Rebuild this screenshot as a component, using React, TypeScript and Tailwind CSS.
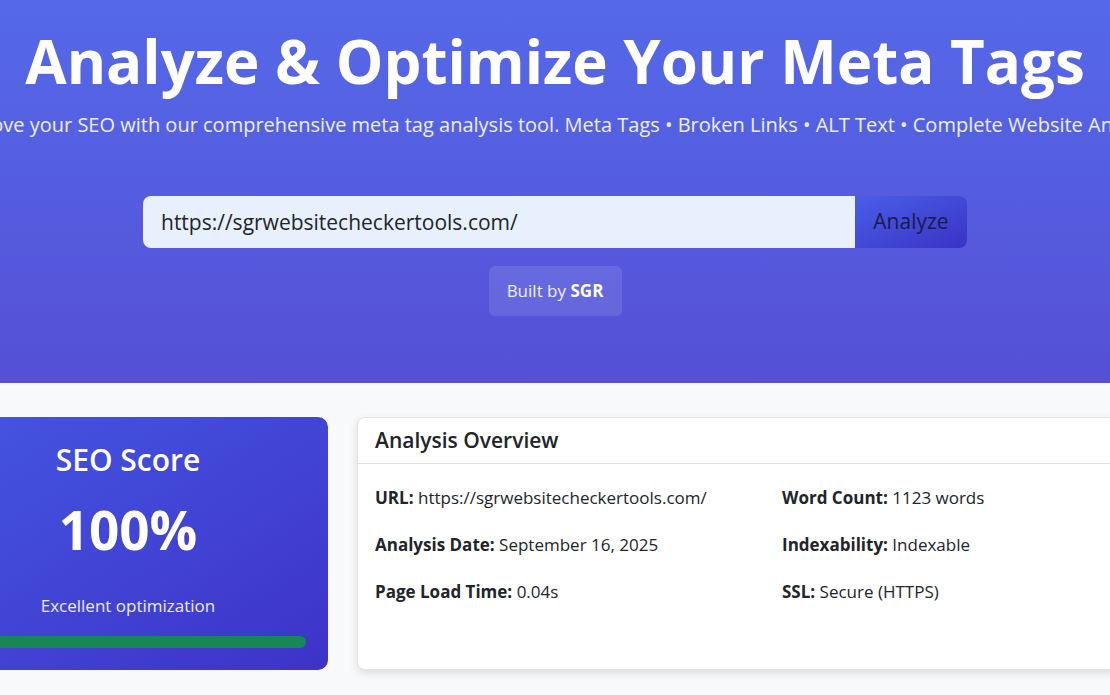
const font = { fontFamily: '"Open Sans", "Noto Sans", sans-serif' };

const overview: [string, string][][] = [
  [
    ['URL:', 'https://sgrwebsitecheckertools.com/'],
    ['Word Count:', '1123 words'],
  ],
  [
    ['Analysis Date:', 'September 16, 2025'],
    ['Indexability:', 'Indexable'],
  ],
  [
    ['Page Load Time:', '0.04s'],
    ['SSL:', 'Secure (HTTPS)'],
  ],
];

// ── Hero ──────────────────────────────────────────────────────────────────────
function Hero() {
  return (
    <header className="flex flex-col items-center bg-gradient-to-b from-[#5469e9] to-[#5550d5] pt-6 pb-[67px] text-white">
      <h1 className="whitespace-nowrap text-[60px] font-bold leading-[74px]">
        Analyze &amp; Optimize Your Meta Tags
      </h1>
      <p className="mt-[12px] whitespace-nowrap text-[20px] leading-[30px] text-white/90">
        Improve your SEO with our comprehensive meta tag analysis tool. Meta Tags • Broken Links • ALT Text • Complete Website Analysis
      </p>

      <form className="mt-[56px] flex h-[52px] w-[824px]" onSubmit={(e) => e.preventDefault()}>
        <input
          type="text"
          defaultValue="https://sgrwebsitecheckertools.com/"
          className="h-full flex-1 rounded-l-lg bg-[#e8f0fe] pl-[18px] text-[21px] text-[#212529] outline-none"
        />
        <button
          type="submit"
          className="h-full w-[112px] rounded-r-lg bg-gradient-to-br from-[#4a5ee8] to-[#3a32c4] text-[21px] text-[#1a1a4a]"
        >
          Analyze
        </button>
      </form>

      <div className="mt-[18px] flex h-[50px] w-[133px] items-center justify-center rounded-md bg-white/10 text-[17px] text-white/90">
        Built by&nbsp;<span className="font-bold text-white">SGR</span>
      </div>
    </header>
  );
}

// ── Score card ────────────────────────────────────────────────────────────────
function ScoreCard() {
  return (
    <div className="flex h-[253px] w-[400px] shrink-0 flex-col items-center rounded-[10px] bg-gradient-to-br from-[#4456e2] to-[#3e32c8] px-[22px] pt-[23px] text-white">
      <div className="text-[30px] font-semibold leading-[40px]">SEO Score</div>
      <div className="mt-[17px] text-[53px] font-bold leading-[66px]">100%</div>
      <div className="mt-[31px] text-[17px] leading-6 text-white/90">Excellent optimization</div>
      <div className="mt-[18px] h-3 w-full rounded-full bg-[#198754]" />
    </div>
  );
}

// ── Overview card ─────────────────────────────────────────────────────────────
function OverviewCard() {
  return (
    <div className="h-[253px] w-[820px] shrink-0 rounded-lg border border-[#e3e5e8] bg-white shadow-[0_3px_8px_rgba(0,0,0,0.12)]">
      <div className="flex h-[46px] items-center border-b border-[#dcdfe3] px-[17px] text-[21px] font-semibold text-[#212529]">
        Analysis Overview
      </div>
      <div className="flex flex-col gap-[23px] px-[17px] pt-[22px] text-[17px] text-[#212529]">
        {overview.map((row, i) => (
          <div key={i} className="grid grid-cols-[407px_1fr] leading-6">
            {row.map(([label, value]) => (
              <div key={label} className="whitespace-nowrap">
                <span className="font-bold">{label}</span> {value}
              </div>
            ))}
          </div>
        ))}
      </div>
    </div>
  );
}

export default function App() {
  return (
    <div className="h-[695px] w-[1110px] overflow-hidden bg-[#f8f9fa]" style={font}>
      <Hero />
      <section className="-ml-[72px] flex gap-[29px] pt-[34px]">
        <ScoreCard />
        <OverviewCard />
      </section>
    </div>
  );
}
